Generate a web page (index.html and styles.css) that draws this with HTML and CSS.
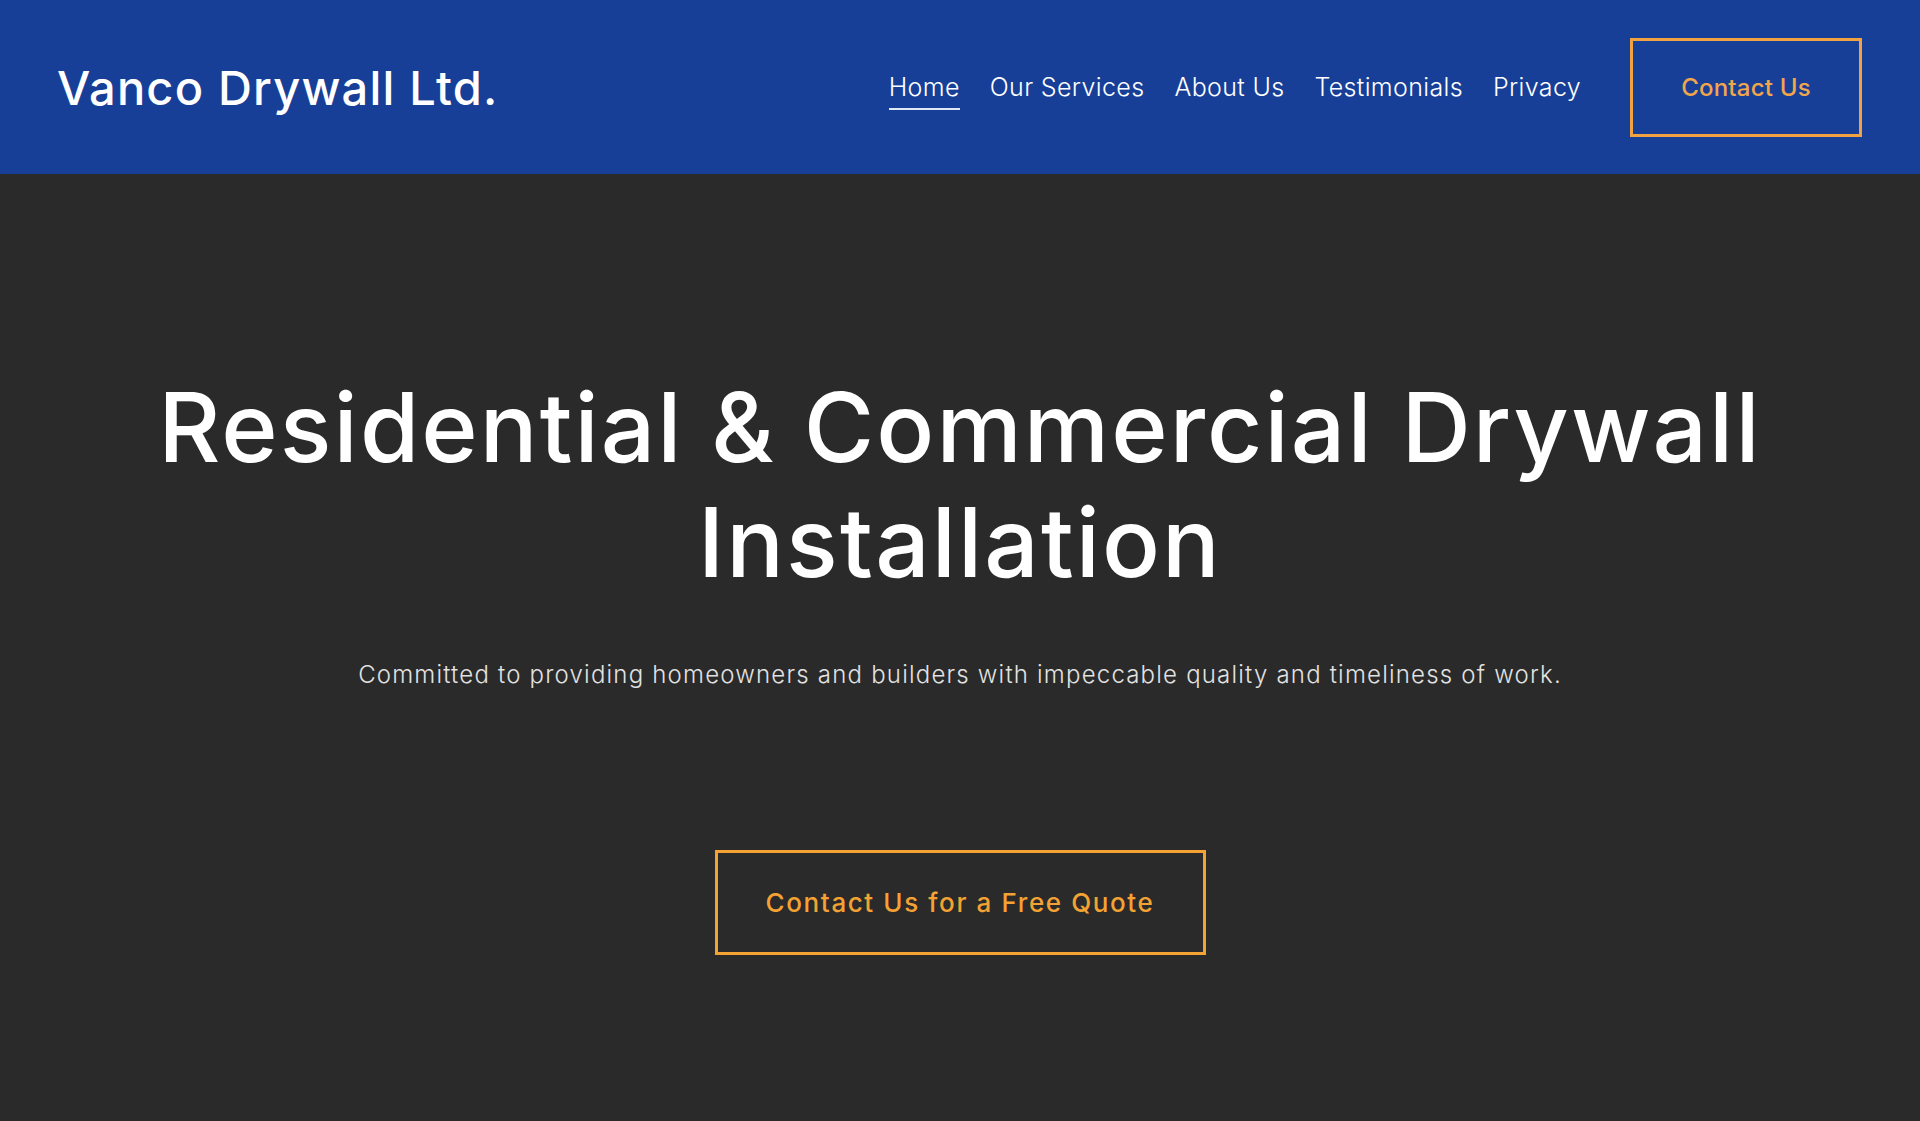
FILE: index.html
```html
<!DOCTYPE html>
<html lang="en">
<head>
<meta charset="utf-8">
<title>Vanco Drywall Ltd.</title>
<link rel="stylesheet" href="styles.css">
</head>
<body>
<header class="site-header">
  <a class="logo" href="#">Vanco Drywall Ltd.</a>
  <div class="header-right">
    <nav class="main-nav">
      <a class="nav-link active" href="#">Home</a>
      <a class="nav-link" href="#">Our Services</a>
      <a class="nav-link" href="#">About Us</a>
      <a class="nav-link" href="#">Testimonials</a>
      <a class="nav-link" href="#">Privacy</a>
    </nav>
    <a class="btn-header" href="#">Contact Us</a>
  </div>
</header>
<main class="hero">
  <h1 class="hero-title">Residential &amp; Commercial Drywall Installation</h1>
  <p class="hero-sub">Committed to providing homeowners and builders with impeccable quality and timeliness of work.</p>
  <a class="btn-cta" href="#">Contact Us for a Free Quote</a>
</main>
</body>
</html>
```

FILE: styles.css
```css
* { box-sizing: border-box; }
html, body { margin: 0; padding: 0; }
body {
  font-family: Inter, "Open Sans", "Liberation Sans", sans-serif;
  background: #2a2a2a;
  color: #fff;
  min-height: 1121px;
}
a { text-decoration: none; }

.site-header {
  height: 174px;
  background: #183f98;
  display: flex;
  align-items: center;
  justify-content: space-between;
  padding: 0 58px 0 57px;
}
.logo {
  color: #fff;
  font-size: 47px;
  font-weight: 500;
  letter-spacing: 1.2px;
}
.header-right {
  display: flex;
  align-items: center;
  gap: 49px;
}
.main-nav {
  display: flex;
  gap: 30px;
  align-items: center;
}
.nav-link {
  color: #fff;
  font-size: 25px;
  font-weight: 300;
  letter-spacing: 0.35px;
  padding: 7px 0 6px;
  border-bottom: 2px solid transparent;
}
.nav-link.active { border-bottom-color: #dfeaf7; }
.btn-header {
  width: 232px;
  height: 99px;
  border: 3px solid #f2a241;
  color: #f2a64a;
  font-size: 24px;
  font-weight: 500;
  letter-spacing: 0.2px;
  display: flex;
  align-items: center;
  justify-content: center;
}

.hero {
  display: flex;
  flex-direction: column;
  align-items: center;
  text-align: center;
  padding-top: 196px;
}
.hero-title {
  margin: 0;
  font-size: 96px;
  line-height: 115px;
  font-weight: 500;
  letter-spacing: 2.1px;
  max-width: 1760px;
}
.hero-sub {
  margin: 60px 0 0;
  font-size: 24px;
  font-weight: 300;
  letter-spacing: 1.2px;
  color: #e2e2e2;
}
.btn-cta {
  margin-top: 161px;
  width: 491px;
  height: 105px;
  border: 3px solid #f3a233;
  color: #f3a233;
  font-size: 26px;
  font-weight: 500;
  letter-spacing: 1.6px;
  display: flex;
  align-items: center;
  justify-content: center;
}
```
